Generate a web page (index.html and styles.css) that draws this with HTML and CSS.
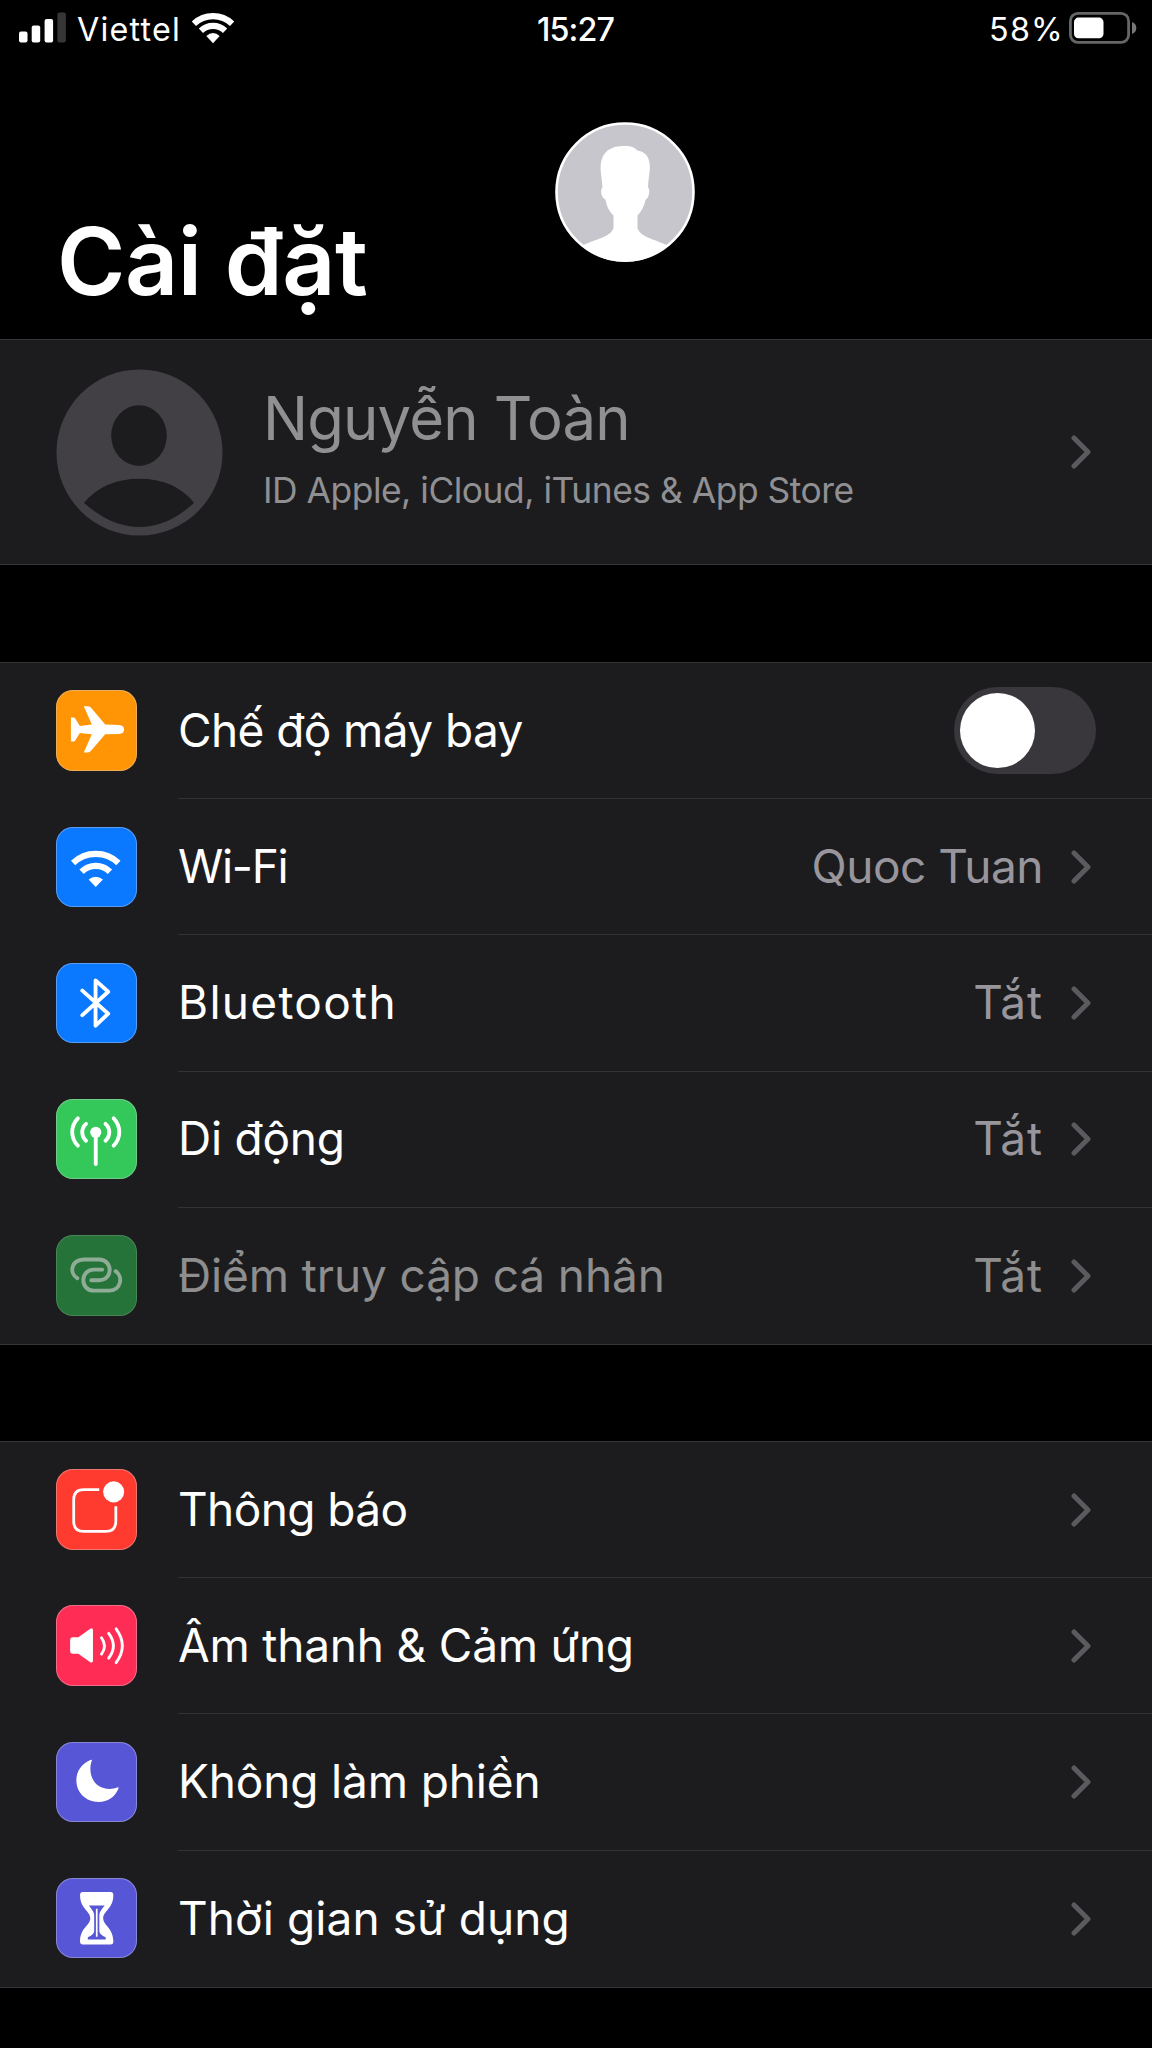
FILE: index.html
```html
<!DOCTYPE html>
<html lang="vi">
<head>
<meta charset="utf-8">
<title>Cài đặt</title>
<link rel="stylesheet" href="styles.css">
</head>
<body>
<svg class="defs" width="0" height="0" aria-hidden="true">
  <symbol id="chevron" viewBox="0 0 20 34"><path d="M3 3 17 17 3 31" fill="none" stroke="currentColor" stroke-width="5" stroke-linecap="round" stroke-linejoin="round"/></symbol>
</svg>

<div class="status">
  <div class="status-left">
    <svg class="signal" width="48" height="31" viewBox="0 0 48 31">
      <rect x="0" y="19.5" width="8.5" height="11" rx="2" fill="#fff"/>
      <rect x="12.7" y="13.5" width="8.5" height="17" rx="2" fill="#fff"/>
      <rect x="25.6" y="7" width="8.5" height="23.5" rx="2" fill="#fff"/>
      <rect x="38.4" y="0.5" width="8.5" height="30" rx="2" fill="#363636"/>
    </svg>
    <span class="carrier">Viettel</span>
    <svg class="wifi" width="42" height="32" viewBox="0 0 42 32">
      <path d="M1.9 11.7A27.8 27.8 0 0 1 40.1 11.7M8.9 18.7A17.8 17.8 0 0 1 33.1 18.7" fill="none" stroke="#fff" stroke-width="6.2"/>
      <path d="M21 31.2 14.3 24Q21 18.2 27.7 24Z" fill="#fff"/>
    </svg>
  </div>
  <span class="clock">15:27</span>
  <div class="status-right">
    <span class="percent">58%</span>
    <svg class="battery" width="68" height="32" viewBox="0 0 68 32">
      <rect x="1.4" y="1.4" width="58.2" height="29" rx="7.5" fill="none" stroke="#666" stroke-width="2.8"/>
      <rect x="5" y="5.6" width="29.5" height="20.6" rx="4.5" fill="#fff"/>
      <path d="M63 10Q67.3 11.5 67.3 16T63 22Z" fill="#777"/>
    </svg>
  </div>
</div>

<header class="header">
  <h1 class="title">Cài đặt</h1>
  <svg class="user" width="140" height="140" viewBox="0 0 140 140">
    <circle cx="70" cy="70" r="68.4" fill="#c7c6cd"/>
    <path d="M69 24C77 23.5 80 26 82.5 28.5C93 30 96 39 94.5 50C93.8 56 93.2 60 93 65.5C95.8 68 93.5 77 90.5 77.5C89.5 84 86 90 82.5 93.5V106C85 115 99 117 112.5 123.5Q94 140 70 140T27.5 123.5C41 117 56 115 58.5 106V93.5C54.5 90 51.5 84 50.5 77.5C46 76 45 68 47.5 65.5C47 60 46.5 56 45.8 50C44.5 34 51 24 69 24Z" fill="#fff"/>
    <circle cx="70" cy="70" r="68.5" fill="none" stroke="#fff" stroke-width="2.6"/>
  </svg>
</header>

<main>
<section class="group profile">
  <svg class="profile-pic" width="167" height="167" viewBox="0 0 168 168">
    <circle cx="84" cy="84" r="83.5" fill="#434045"/>
    <ellipse cx="83.5" cy="67" rx="28" ry="30.5" fill="#1c1c1e"/>
    <path d="M29.5 134.5Q50 111.5 84 111.5T137.5 134.5Q112 158 84 158T29.5 134.5Z" fill="#1c1c1e" stroke="#1c1c1e" stroke-linejoin="round" stroke-width="2"/>
  </svg>
  <div class="profile-text">
    <div class="name">Nguyễn Toàn</div>
    <div class="detail">ID Apple, iCloud, iTunes &amp; App Store</div>
  </div>
  <svg class="chevron"><use href="#chevron"/></svg>
</section>

<section class="group">
  <div class="row">
    <svg class="icon orange" viewBox="0 0 81 81"><path fill="#fff" d="M63.5 35.2Q68.5 35.6 68.5 39.7T63.5 44.2L49.5 44.6 35.5 61Q34.3 62.8 32 62.8H28L36 44.6 24 43.2 19.5 50.5Q18.8 51.8 17.5 51.8H15V27.6H17.5Q18.8 27.6 19.5 28.9L24 36.2 36 34.8 28 16.4H32Q34.3 16.4 35.5 18.2L49.5 34.8Z"/></svg>
    <div class="cell"><span class="label t-airplane">Chế độ máy bay</span><span class="toggle"><span class="knob"></span></span></div>
  </div>
  <div class="row">
    <svg class="icon blue" viewBox="0 0 81 81"><path d="M17.2 36.2A33 33 0 0 1 62.8 36.2M25.7 45A20.5 20.5 0 0 1 54.3 45" fill="none" stroke="#fff" stroke-width="6.2"/><path d="M40 60.3 32.8 52.8Q40 47.2 47.2 52.8Z" fill="#fff"/></svg>
    <div class="cell"><span class="label t-wifi">Wi-Fi</span><span class="value t-network">Quoc Tuan</span><svg class="chevron"><use href="#chevron"/></svg></div>
  </div>
  <div class="row">
    <svg class="icon blue" viewBox="0 0 81 81"><path d="M26.5 27.8 52.5 51 39.8 63V17.5L52.5 28.9 26.5 52.5" class="line w4"/></svg>
    <div class="cell"><span class="label t-bluetooth">Bluetooth</span><span class="value t-off">Tắt</span><svg class="chevron"><use href="#chevron"/></svg></div>
  </div>
  <div class="row">
    <svg class="icon green" viewBox="0 0 81 81"><circle cx="40" cy="33.5" r="5.6" fill="#fff"/><path d="M40 34V65.5M22 19.5A19.5 19.5 0 0 0 22 47M58 19.5A19.5 19.5 0 0 1 58 47M30.2 25A11.4 11.4 0 0 0 30.2 42M49.8 25A11.4 11.4 0 0 1 49.8 42" class="line w4"/></svg>
    <div class="cell"><span class="label t-mobile">Di động</span><span class="value t-off">Tắt</span><svg class="chevron"><use href="#chevron"/></svg></div>
  </div>
  <div class="row">
    <svg class="icon dim" viewBox="0 0 81 81"><path d="M21.5 43.5C13 38.5 15 25 28 24.7H43.5C57.5 25 57.5 45.5 43.5 45.5H35.5M46.5 34.8H38C24 35 24 56 38 56H53.5C66 56 67.5 41 60 36.5" class="line w4"/></svg>
    <div class="cell"><span class="label muted t-hotspot">Điểm truy cập cá nhân</span><span class="value muted t-off">Tắt</span><svg class="chevron"><use href="#chevron"/></svg></div>
  </div>
</section>

<section class="group">
  <div class="row">
    <svg class="icon red" viewBox="0 0 81 81"><path d="M43.5 20.8H28Q17.8 20.8 17.8 31V52.5Q17.8 62.8 28 62.8H50Q60.2 62.8 60.2 52.5V37.5" fill="none" stroke="#fff" stroke-width="2.8"/><circle cx="58" cy="23" r="10.6" fill="#fff"/></svg>
    <div class="cell"><span class="label t-notify">Thông báo</span><svg class="chevron"><use href="#chevron"/></svg></div>
  </div>
  <div class="row">
    <svg class="icon pink" viewBox="0 0 81 81"><path d="M17 32.5H22.5L34.5 23.8Q37.2 22.5 37.2 25.5V55.5Q37.2 59 34.5 57.5L22.5 49H17Q14.2 49 14.2 46V35.5Q14.2 32.5 17 32.5Z" fill="#fff"/><path d="M45.8 33Q51.8 41 45.8 49.5M53 28.5Q62.5 41 53 53.5M60.5 24Q73 41 60.5 58" class="line w3"/></svg>
    <div class="cell"><span class="label t-sound">Âm thanh &amp; Cảm ứng</span><svg class="chevron"><use href="#chevron"/></svg></div>
  </div>
  <div class="row">
    <svg class="icon purple" viewBox="0 0 81 81"><path d="M36.2 18.2C33 27 34.5 37.5 42 43.5C48.5 48 56 48 62.2 45.6Q63.4 45.5 62.8 47C59 55.5 52 60.3 43 60.3C30 60.3 20.5 51 20.5 38.5C20.5 29 26.5 21.5 34.5 18.2Q36 17.5 36.2 18.2Z" fill="#fff"/></svg>
    <div class="cell"><span class="label t-dnd">Không làm phiền</span><svg class="chevron"><use href="#chevron"/></svg></div>
  </div>
  <div class="row">
    <svg class="icon purple" viewBox="0 0 81 81"><path d="M27 14H55Q57.7 14 57.7 17C57.7 31 47.5 33 47.5 40.5S57.7 50 57.7 64Q57.7 67 55 67H27Q24.2 67 24.2 64C24.2 50 34.5 48 34.5 40.5S24.2 31 24.2 17Q24.2 14 27 14Z" fill="#fff"/><path d="M33 27.7H49Q43.6 34 43.6 37V53.5Q44 57 50 59.5V62H32V59.5Q38 57 38.4 53.5V37Q38.400 34 33 27.700Z" fill="#5756d6"/><path d="M41 31V59" stroke="#fff" stroke-width="1.700"/></svg>
    <div class="cell"><span class="label t-screen">Thời gian sử dụng</span><svg class="chevron"><use href="#chevron"/></svg></div>
  </div>
</section>
</main>
</body>
</html>
```
FILE: styles.css
```css
* { box-sizing: border-box; }
body {
  margin: 0;
  min-height: 2048px;
  background: #000;
  color: #fff;
  font-family: Inter, "Liberation Sans", sans-serif;
  overflow-x: hidden;
}
svg { display: block; flex: none; }
.defs { position: absolute; }

.status {
  display: grid;
  grid-template-columns: 1fr auto 1fr;
  align-items: center;
  height: 58px;
  padding: 0 15px 0 19px;
  font-size: 32.3px;
  line-height: 56px;
}
.status-left, .status-right { display: flex; align-items: center; }
.status-right { justify-content: flex-end; }
.signal { margin-top: -3px; }
.carrier { margin: 2px 0 0 10px; letter-spacing: 1.2px; }
.wifi { margin: -3px 0 0 11px; }
.clock { margin: 2px 5px 0 0; font-weight: 500; letter-spacing: -.9px; }
.percent { margin: 2px 5px 0 0; letter-spacing: 1.2px; }
.battery { margin-top: -2px; }

.header {
  display: flex;
  align-items: flex-start;
  height: 281px;
  padding-left: 57px;
}
.title {
  width: 498px;
  margin: 147px 0 0;
  font-size: 92.8px;
  font-weight: 600;
  line-height: 112px;
  letter-spacing: -.4px;
}
.user { margin-top: 64px; }

.group {
  background: #1c1c1e;
  border-top: 1px solid #353537;
  border-bottom: 1px solid #353537;
  margin-bottom: 97px;
}
.profile {
  display: flex;
  align-items: center;
  height: 226px;
  padding: 0 61px 0 56px;
  color: #909093;
}
.profile-text { flex: 1; padding: 0 0 11px 40px; }
.name { font-size: 59.8px; line-height: 73px; letter-spacing: -.82px; }
.detail {
  margin-top: 14px;
  font-size: 35.4px;
  line-height: 43px;
  letter-spacing: -.48px;
}
.chevron { width: 20px; height: 34px; color: #5b5b5f; }

.row {
  display: flex;
  align-items: center;
  gap: 41.5px;
  height: 136.2px;
  padding-left: 56px;
}
.icon {
  width: 80.5px;
  height: 80.5px;
  margin-top: -1px;
  border-radius: 17px;
  box-shadow: inset 0 0 0 1px rgba(210, 210, 215, .4);
}
.orange { background: #ff9505; }
.blue { background: #0a79ff; }
.green { background: #34c759; }
.red { background: #ff3b30; }
.pink { background: #ff2d55; }
.purple { background: #5756d6; }
.dim { background: #257338; box-shadow: inset 0 0 0 1px rgba(210, 210, 215, .2); }
.line { fill: none; stroke: #fff; stroke-linecap: round; stroke-linejoin: round; }
.dim .line { stroke: #8fad96; }
.w4 { stroke-width: 3.9px; }
.w3 { stroke-width: 2.9px; }

.cell {
  flex: 1;
  display: flex;
  align-items: center;
  align-self: stretch;
  padding-right: 61px;
  border-bottom: 1px solid #333335;
  font-size: 46px;
  line-height: 56px;
  white-space: nowrap;
}
.row:last-child .cell { border-bottom: 0; }
.label { flex: 1; margin-top: -2px; }
.value { margin: -2px 28px 0 0; color: #98959c; }
.muted { color: #8e8e8f; }
.group + .group + .group { margin-top: -1px; }

.toggle {
  width: 142px;
  height: 87px;
  margin-right: -5px;
  padding: 6px;
  border-radius: 44px;
  background: #39363c;
}
.knob { display: block; width: 75px; height: 75px; border-radius: 50%; background: #fff; }

.t-airplane { letter-spacing: -.6px; }
.t-wifi { letter-spacing: -1.3px; }
.t-bluetooth { letter-spacing: 1.3px; }
.t-mobile { letter-spacing: -.25px; }
.t-hotspot { letter-spacing: -.12px; }
.t-notify { letter-spacing: -.6px; }
.t-sound { letter-spacing: -.2px; }
.t-dnd { letter-spacing: -.15px; }
.t-screen { letter-spacing: .1px; }
.t-network { letter-spacing: -.47px; }
.t-off { letter-spacing: .89px; }
```
